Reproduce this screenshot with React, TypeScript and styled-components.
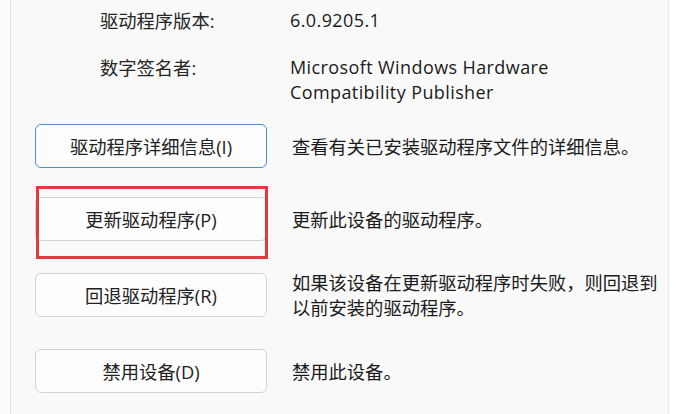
import { FC } from 'react';
import styled, { createGlobalStyle } from 'styled-components';

const GlobalStyle = createGlobalStyle`
  html, body {
    margin: 0;
    padding: 0;
    background: #f9f9f9;
  }
  body {
    font-family: "Open Sans", "Noto Sans CJK SC", sans-serif;
    font-size: 18.3px;
    color: #1b1b1b;
  }
`;

interface InfoItem {
  label: string;
  value: string[];
}

interface ActionItem {
  label: string;
  desc: string;
  focused?: boolean;
  marked?: boolean;
}

const info: InfoItem[] = [
  { label: '驱动程序版本:', value: ['6.0.9205.1'] },
  { label: '数字签名者:', value: ['Microsoft Windows Hardware', 'Compatibility Publisher'] },
];

const actions: ActionItem[] = [
  { label: '驱动程序详细信息(I)', desc: '查看有关已安装驱动程序文件的详细信息。', focused: true },
  { label: '更新驱动程序(P)', desc: '更新此设备的驱动程序。', marked: true },
  { label: '回退驱动程序(R)', desc: '如果该设备在更新驱动程序时失败，则回退到以前安装的驱动程序。' },
  { label: '禁用设备(D)', desc: '禁用此设备。' },
];

const App: FC = () => {
  return (
    <>
      <GlobalStyle />
      <Frame>
        <LeftStrip />
        <Panel>
          <InfoGrid>
            {info.map((item) => (
              <InfoRow key={item.label}>
                <Label>{item.label}</Label>
                <Value>
                  {item.value.map((line) => (
                    <span key={line}>{line}</span>
                  ))}
                </Value>
              </InfoRow>
            ))}
          </InfoGrid>
          <Actions>
            {actions.map((a) => (
              <ActionRow key={a.label}>
                <ButtonWrap>
                  <ActionButton $focused={a.focused}>{a.label}</ActionButton>
                  {a.marked && <Highlight />}
                </ButtonWrap>
                <Desc>{a.desc}</Desc>
              </ActionRow>
            ))}
          </Actions>
        </Panel>
        <RightStrip />
      </Frame>
    </>
  );
};

export default App;

const Frame = styled.div`
  display: flex;
  width: 681px;
  height: 414px;
  overflow: hidden;
`;

const LeftStrip = styled.div`
  width: 10px;
  flex-shrink: 0;
  background: #fbfbfb;
  border-right: 1px solid #e2e2e2;
`;

const RightStrip = styled.div`
  width: 12px;
  flex-shrink: 0;
  background: #ffffff;
  border-left: 1px solid #e6e6e6;
`;

const Panel = styled.div`
  flex: 1;
  display: flex;
  flex-direction: column;
  padding: 8px 6px 0 24px;
  background: #f9f9f9;
`;

const InfoGrid = styled.div`
  display: flex;
  flex-direction: column;
  gap: 22px;
  padding-left: 65px;
`;

const InfoRow = styled.div`
  display: grid;
  grid-template-columns: 190px 1fr;
  line-height: 25px;
`;

const Label = styled.div`
  color: #262626;
`;

const Value = styled.div`
  display: flex;
  flex-direction: column;
  font-size: 18px;
  letter-spacing: 0.4px;
  color: #1b1b1b;
`;

const Actions = styled.div`
  display: flex;
  flex-direction: column;
  gap: 29px;
  margin-top: 19px;
`;

const ActionRow = styled.div`
  display: grid;
  grid-template-columns: 232px 1fr;
  column-gap: 25px;
  align-items: center;
`;

const ButtonWrap = styled.div`
  position: relative;
`;

const ActionButton = styled.button<{ $focused?: boolean }>`
  display: flex;
  align-items: center;
  justify-content: center;
  width: 232px;
  height: 44px;
  padding: 0;
  font: inherit;
  color: #222222;
  background: #fdfdfd;
  border: ${(p) => (p.$focused ? '1.5px solid #4a8fd3' : '1px solid #d3d3d3')};
  border-radius: 6px;
`;

const Highlight = styled.div`
  position: absolute;
  left: 1px;
  right: -1px;
  top: -11px;
  bottom: -18px;
  border: 3.5px solid #e03a3e;
  background: transparent;
`;

const Desc = styled.div`
  line-height: 25px;
  color: #1b1b1b;
`;
